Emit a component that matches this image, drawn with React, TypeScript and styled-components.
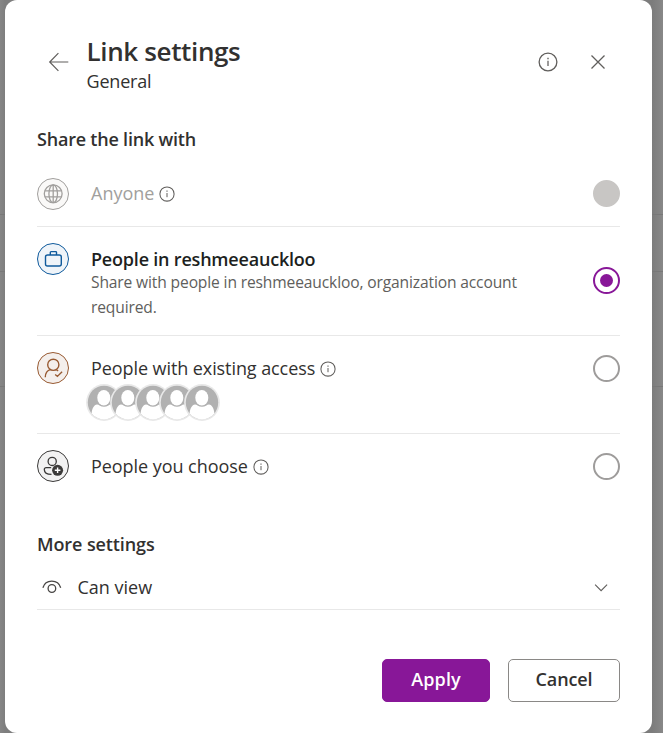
import React from 'react';
import styled, { createGlobalStyle, css } from 'styled-components';

const GlobalStyle = createGlobalStyle`
  *, *::before, *::after { box-sizing: border-box; }
  body { margin: 0; }
`;

const Scrim = styled.div`
  width: 663px;
  height: 733px;
  padding: 0 11px 0 5px;
  overflow: hidden;
  font-family: "Open Sans", "Noto Sans", sans-serif;
  font-size: 18px;
  color: #323130;
  background:
    linear-gradient(#787878, #787878) 0 214px / 100% 1px no-repeat,
    linear-gradient(#787878, #787878) 0 271px / 100% 1px no-repeat,
    linear-gradient(#787878, #787878) 0 386px / 100% 1px no-repeat,
    linear-gradient(90deg, #868686 0, #7e7e7e 5px, #7c7c7c 652px, #888888 663px);
`;

const Dialog = styled.section`
  display: flex;
  flex-direction: column;
  height: 733px;
  padding: 0 32px;
  border-radius: 12px;
  background: #fff;
`;

const Header = styled.header`
  display: flex;
  height: 124px;
  padding: 34px 11px 0;
`;

const IconButton = styled.button`
  display: flex;
  align-items: center;
  justify-content: center;
  width: 22px;
  height: 22px;
  margin-top: 17px;
  padding: 0;
  border: 0;
  background: none;
  color: #605e5c;
`;

const Titles = styled.div`
  flex: 1;
  padding-left: 16.5px;
`;

const Title = styled.h1`
  margin: 0;
  font-size: 26px;
  line-height: 34px;
  font-weight: 600;
  letter-spacing: -0.36px;
`;

const Subtitle = styled.div`
  line-height: 26px;
  letter-spacing: -0.2px;
`;

const HeaderActions = styled.div`
  display: flex;
  gap: 28px;
`;

const SectionTitle = styled.h2<{ $spacing: number }>`
  margin: 0;
  font-size: 18px;
  line-height: 30px;
  font-weight: 600;
  letter-spacing: ${p => p.$spacing}px;
`;

const Options = styled.div`
  display: flex;
  flex-direction: column;
  height: 375px;
  padding-top: 8px;
`;

const Option = styled.div<{ $height: number; $last?: boolean }>`
  display: flex;
  gap: 22px;
  height: ${p => p.$height}px;
  padding-top: 16px;
  border-bottom: ${p => (p.$last ? 0 : '1px solid #e8e8e8')};
`;

const tones = {
  gray: css`color: #a19f9d; background: #faf9f8;`,
  blue: css`color: #0f5a9c; background: #eff4f9;`,
  brown: css`color: #985a32; background: #f4efec;`,
  dark: css`color: #3b3a39; background: #f2f2f2;`,
};

const Badge = styled.div<{ $tone: keyof typeof tones }>`
  display: flex;
  flex: none;
  align-items: center;
  justify-content: center;
  width: 32px;
  height: 32px;
  border: 1px solid currentColor;
  border-radius: 50%;
  ${p => tones[p.$tone]}
`;

const OptionBody = styled.div<{ $top: number }>`
  flex: 1;
  padding-top: ${p => p.$top}px;
`;

const Label = styled.div<{ $spacing?: number; $strong?: boolean; $muted?: boolean }>`
  display: flex;
  align-items: center;
  gap: 5px;
  height: 24px;
  line-height: 24px;
  letter-spacing: ${p => p.$spacing ?? 0}px;
  font-weight: ${p => (p.$strong ? 600 : 400)};
  color: ${p => (p.$muted ? '#a19f9d' : p.$strong ? '#201f1e' : '#323130')};

  svg { margin-top: ${p => (p.$muted ? 2 : 1)}px; }
`;

const Description = styled.div`
  width: 450px;
  margin-top: -1px;
  font-size: 15.6px;
  line-height: 25px;
  letter-spacing: -0.14px;
  color: #605e5c;
`;

const Avatars = styled.div`
  display: flex;
  margin: 4px 0 0 -5px;
`;

const AvatarRing = styled.span`
  display: flex;
  width: 36px;
  height: 37px;
  margin-right: -11.6px;
`;

const Radio = styled.span<{ $state: 'off' | 'on' | 'disabled'; $top: number }>`
  display: flex;
  flex: none;
  align-items: center;
  justify-content: center;
  width: 27px;
  height: 27px;
  margin-top: ${p => p.$top}px;
  border-radius: 50%;
  border: 2px solid ${p => ({ off: '#9e9c9b', on: '#881798', disabled: '#c8c6c4' })[p.$state]};
  background: ${p => (p.$state === 'disabled' ? '#c8c6c4' : '#fff')};

  &::after {
    content: ${p => (p.$state === 'on' ? "''" : 'none')};
    width: 13px;
    height: 13px;
    border-radius: 50%;
    background: #881798;
  }
`;

const Permission = styled.div`
  display: flex;
  align-items: center;
  height: 51px;
  padding: 6px 11px 0 5px;
  border-bottom: 1px solid #e8e8e8;
`;

const PermissionLabel = styled.span`
  flex: 1;
  padding-left: 15.5px;
  line-height: 24px;
`;

const Footer = styled.footer`
  display: flex;
  justify-content: flex-end;
  gap: 18px;
  padding-top: 49px;
`;

const Button = styled.button<{ $primary?: boolean }>`
  width: ${p => (p.$primary ? 108 : 112)}px;
  height: 43px;
  padding: 0 0 3px;
  border: 1px solid ${p => (p.$primary ? '#881798' : '#8a8886')};
  border-radius: 5px;
  background: ${p => (p.$primary ? '#881798' : '#fff')};
  color: ${p => (p.$primary ? '#fff' : '#323130')};
  font: 600 18px/24px "Open Sans", "Noto Sans", sans-serif;
  letter-spacing: ${p => (p.$primary ? 0.1 : -0.1)}px;
`;

const InfoIcon = ({ size = 16, color = '#605e5c' }: { size?: number; color?: string }) => (
  <svg width={size} height={size} viewBox="0 0 16 16" fill="none" stroke={color}>
    <circle cx="8" cy="8" r="7.1" strokeWidth="1.05" />
    <path d="M8 7v4.200" strokeWidth="1" />
    <path d="M8 4.600v1.200" strokeWidth="1.100" />
  </svg>
);

const BackIcon = () => (
  <svg width="22" height="22" viewBox="0 0 22 22" fill="none" stroke="currentColor" strokeWidth="1.200">
    <path d="M20.300 11H2M10.400 2.200L1.700 11l8.700 8.800" />
  </svg>
);

const CloseIcon = () => (
  <svg width="16" height="16" viewBox="0 0 16 16" fill="none" stroke="currentColor" strokeWidth="1.300">
    <path d="M1.500 1.500l13 13M14.500 1.500l-13 13" />
  </svg>
);

const GlobeIcon = () => (
  <svg width="20" height="20" viewBox="0 0 20 20" fill="none" stroke="currentColor" strokeWidth="1.300">
    <circle cx="10.200" cy="9.800" r="8.900" />
    <ellipse cx="10.200" cy="9.800" rx="4.300" ry="8.900" />
    <path d="M10.200 .9v17.800M2 6.800h16.400M2 12.800h16.400" />
  </svg>
);

const BriefcaseIcon = () => (
  <svg width="20" height="20" viewBox="0 0 20 20" fill="none" stroke="currentColor" strokeWidth="1.400">
    <rect x="2.500" y="6" width="15.800" height="11" rx="2" />
    <path d="M7.300 6V3.400a.8.8 0 0 1 .8-.8h4.600a.8.8 0 0 1 .8.8V6" />
  </svg>
);

const PersonCheckIcon = () => (
  <svg width="20" height="20" viewBox="0 0 20 20" fill="none" stroke="currentColor" strokeWidth="1.400">
    <circle cx="10.300" cy="6.800" r="5.600" />
    <path d="M2.300 19.200c.1-4.400 2.400-7 5.200-7.600M13 11.600c.8.3 1.500.7 2.100 1.300M12.200 16.400l2.200 2 4.700-4.700" />
  </svg>
);

const PersonAddIcon = () => (
  <svg width="22" height="22" viewBox="0 0 22 22" fill="none" stroke="currentColor" strokeWidth="1.300">
    <circle cx="10.200" cy="6.400" r="4.100" />
    <path d="M9.200 12.600H4.100c-1 0-1.800.8-1.800 1.800 0 3 2.600 4.900 7.200 5" />
    <circle cx="15.600" cy="15.300" r="5.500" fill="currentColor" stroke="none" />
    <path d="M15.600 12.500v5.600M12.800 15.300h5.600" stroke="#fff" strokeWidth="1.400" />
  </svg>
);

const AvatarIcon = () => (
  <svg width="36" height="37" viewBox="0 0 36 37">
    <ellipse cx="18" cy="18.500" rx="17.900" ry="18.400" fill="#e8e8e8" />
    <ellipse cx="18" cy="18.500" rx="16.200" ry="16.800" fill="#b1b1b1" />
    <path d="M5.600 29.400C6 24.600 8 20.700 11 20.400c2 0 3.600 2.400 7 2.400s5-2.400 7-2.400c3 .3 5 4.200 5.400 9A16.200 16.800 0 0 1 5.600 29.400z" fill="#fff" />
    <ellipse cx="17.800" cy="13.800" rx="6.500" ry="7.800" fill="#fff" />
  </svg>
);

const EyeIcon = () => (
  <svg width="20" height="20" viewBox="0 0 20 20" fill="none" stroke="#484644" strokeWidth="1.300">
    <path d="M.9 10.800C2.100 6.700 5.500 4.200 9.800 4.200s7.700 2.500 8.900 6.600" />
    <circle cx="9.900" cy="11.500" r="3.800" />
  </svg>
);

const ChevronIcon = () => (
  <svg width="16" height="16" viewBox="0 0 16 16" fill="none" stroke="#605e5c" strokeWidth="1.100">
    <path d="M2.100 5.700L8.100 11.700l6-6" />
  </svg>
);

export default function App() {
  return (
    <>
      <GlobalStyle />
      <Scrim>
        <Dialog>
          <Header>
            <IconButton aria-label="Back"><BackIcon /></IconButton>
            <Titles>
              <Title>Link settings</Title>
              <Subtitle>General</Subtitle>
            </Titles>
            <HeaderActions>
              <IconButton aria-label="Help"><InfoIcon size={20} /></IconButton>
              <IconButton aria-label="Close"><CloseIcon /></IconButton>
            </HeaderActions>
          </Header>

          <SectionTitle $spacing={-0.21}>Share the link with</SectionTitle>
          <Options>
            <Option $height={65}>
              <Badge $tone="gray"><GlobeIcon /></Badge>
              <OptionBody $top={3}>
                <Label $muted>Anyone<InfoIcon /></Label>
              </OptionBody>
              <Radio $state="disabled" $top={2} />
            </Option>
            <Option $height={109}>
              <Badge $tone="blue"><BriefcaseIcon /></Badge>
              <OptionBody $top={4}>
                <Label $strong $spacing={-0.2}>People in reshmeeauckloo</Label>
                <Description>
                  Share with people in reshmeeauckloo, organization account required.
                </Description>
              </OptionBody>
              <Radio $state="on" $top={24} />
            </Option>
            <Option $height={98}>
              <Badge $tone="brown"><PersonCheckIcon /></Badge>
              <OptionBody $top={4}>
                <Label $spacing={-0.08}>People with existing access<InfoIcon /></Label>
                <Avatars>
                  {[0, 1, 2, 3, 4].map(i => (
                    <AvatarRing key={i}><AvatarIcon /></AvatarRing>
                  ))}
                </Avatars>
              </OptionBody>
              <Radio $state="off" $top={3} />
            </Option>
            <Option $height={80} $last>
              <Badge $tone="dark"><PersonAddIcon /></Badge>
              <OptionBody $top={4}>
                <Label $spacing={-0.05}>People you choose<InfoIcon /></Label>
              </OptionBody>
              <Radio $state="off" $top={3} />
            </Option>
          </Options>

          <SectionTitle $spacing={-0.1}>More settings</SectionTitle>
          <Permission>
            <EyeIcon />
            <PermissionLabel>Can view</PermissionLabel>
            <ChevronIcon />
          </Permission>

          <Footer>
            <Button $primary>Apply</Button>
            <Button>Cancel</Button>
          </Footer>
        </Dialog>
      </Scrim>
    </>
  );
}
